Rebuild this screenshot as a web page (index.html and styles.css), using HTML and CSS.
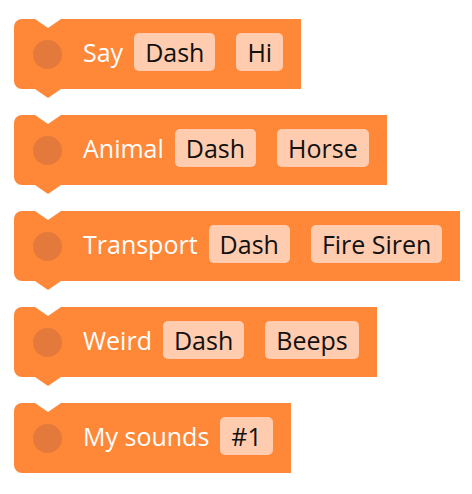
FILE: index.html
```html
<!DOCTYPE html>
<html>
<head>
<meta charset="utf-8">
<link rel="stylesheet" href="styles.css">
</head>
<body>
<div class="stack">
  <div class="block">
    <span class="dot"></span>
    <span class="label">Say</span>
    <span class="field">Dash</span>
    <span class="field">Hi</span>
  </div>
  <div class="block">
    <span class="dot"></span>
    <span class="label">Animal</span>
    <span class="field">Dash</span>
    <span class="field">Horse</span>
  </div>
  <div class="block">
    <span class="dot"></span>
    <span class="label">Transport</span>
    <span class="field">Dash</span>
    <span class="field">Fire Siren</span>
  </div>
  <div class="block">
    <span class="dot"></span>
    <span class="label">Weird</span>
    <span class="field">Dash</span>
    <span class="field">Beeps</span>
  </div>
  <div class="block">
    <span class="dot"></span>
    <span class="label">My sounds</span>
    <span class="field">#1</span>
  </div>
</div>
</body>
</html>
```

FILE: styles.css
```css
html, body {
  margin: 0;
  background: #ffffff;
}
body {
  padding: 19px 0 0 14px;
  font-family: "Open Sans", "Liberation Sans", sans-serif;
}
.stack {
  display: flex;
  flex-direction: column;
  align-items: flex-start;
  gap: 26px;
}
.block {
  position: relative;
  display: flex;
  align-items: center;
  box-sizing: border-box;
  height: 70px;
  padding: 14px 18px 18px 19px;
  background: #ff8838;
  border-radius: 8px 0 0 8px;
}
.block::before {
  content: "";
  position: absolute;
  left: 21px;
  top: 0;
  width: 26px;
  height: 9px;
  background: #ffffff;
  clip-path: polygon(0 0, 100% 0, 50% 100%);
}
.block::after {
  content: "";
  position: absolute;
  left: 21px;
  top: 100%;
  width: 26px;
  height: 9px;
  background: #ff8838;
  clip-path: polygon(0 0, 100% 0, 50% 100%);
}
.dot {
  width: 29px;
  height: 29px;
  margin-top: 4px;
  margin-right: 21px;
  border-radius: 50%;
  background: #e3793a;
  flex: none;
}
.label {
  color: #ffffff;
  font-size: 25px;
  line-height: 38px;
  margin-right: 11px;
  white-space: nowrap;
}
.field {
  background: #ffccb0;
  color: #111111;
  font-size: 25px;
  line-height: 38px;
  height: 38px;
  padding: 0 11px;
  border-radius: 5px;
  white-space: nowrap;
}
.field + .field {
  margin-left: 21px;
}
```
